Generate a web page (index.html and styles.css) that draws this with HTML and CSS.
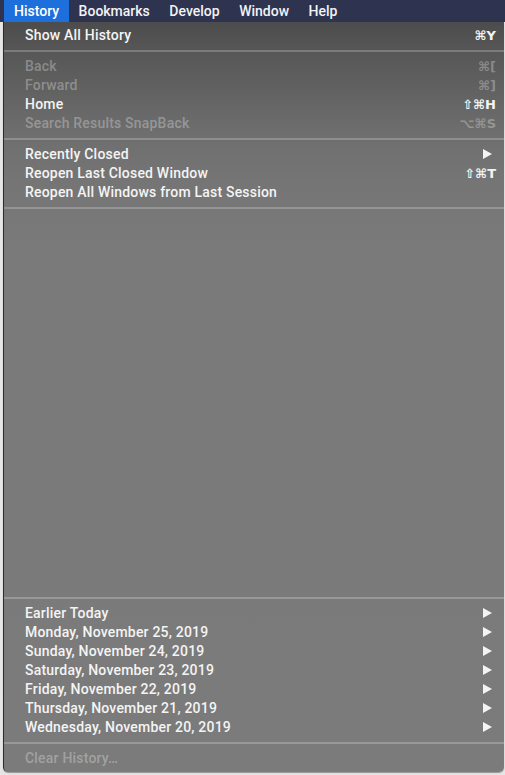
FILE: index.html
```html
<!DOCTYPE html>
<html lang="en">
<head>
<meta charset="utf-8">
<title>History menu</title>
<link rel="stylesheet" href="styles.css">
</head>
<body>
<div class="menubar">
  <span class="mb-item active">History</span>
  <span class="mb-item">Bookmarks</span>
  <span class="mb-item">Develop</span>
  <span class="mb-item">Window</span>
  <span class="mb-item">Help</span>
</div>
<div class="stage">
  <div class="menu">
    <div class="item"><span class="label">Show All History</span><span class="key">⌘Y</span></div>
    <div class="sep"></div>
    <div class="item disabled"><span class="label">Back</span><span class="key">⌘[</span></div>
    <div class="item disabled"><span class="label">Forward</span><span class="key">⌘]</span></div>
    <div class="item"><span class="label">Home</span><span class="key">⇧⌘H</span></div>
    <div class="item disabled"><span class="label">Search Results SnapBack</span><span class="key">⌥⌘S</span></div>
    <div class="sep"></div>
    <div class="item"><span class="label">Recently Closed</span><svg class="arrow" viewBox="0 0 9 10"><path d="M0 0 L9 5 L0 10 Z"/></svg></div>
    <div class="item"><span class="label">Reopen Last Closed Window</span><span class="key">⇧⌘T</span></div>
    <div class="item"><span class="label">Reopen All Windows from Last Session</span></div>
    <div class="sep"></div>
    <div class="spacer"></div>
    <div class="sep"></div>
    <div class="item"><span class="label">Earlier Today</span><svg class="arrow" viewBox="0 0 9 10"><path d="M0 0 L9 5 L0 10 Z"/></svg></div>
    <div class="item"><span class="label">Monday, November 25, 2019</span><svg class="arrow" viewBox="0 0 9 10"><path d="M0 0 L9 5 L0 10 Z"/></svg></div>
    <div class="item"><span class="label">Sunday, November 24, 2019</span><svg class="arrow" viewBox="0 0 9 10"><path d="M0 0 L9 5 L0 10 Z"/></svg></div>
    <div class="item"><span class="label">Saturday, November 23, 2019</span><svg class="arrow" viewBox="0 0 9 10"><path d="M0 0 L9 5 L0 10 Z"/></svg></div>
    <div class="item"><span class="label">Friday, November 22, 2019</span><svg class="arrow" viewBox="0 0 9 10"><path d="M0 0 L9 5 L0 10 Z"/></svg></div>
    <div class="item"><span class="label">Thursday, November 21, 2019</span><svg class="arrow" viewBox="0 0 9 10"><path d="M0 0 L9 5 L0 10 Z"/></svg></div>
    <div class="item"><span class="label">Wednesday, November 20, 2019</span><svg class="arrow" viewBox="0 0 9 10"><path d="M0 0 L9 5 L0 10 Z"/></svg></div>
    <div class="sep"></div>
    <div class="item disabled"><span class="label">Clear History…</span></div>
  </div>
</div>
</body>
</html>
```

FILE: styles.css
```css
html, body {
  margin: 0;
  padding: 0;
}
body {
  width: 505px;
  height: 775px;
  overflow: hidden;
  background: #e6e6e6;
  font-family: Roboto, "Liberation Sans", "DejaVu Sans", sans-serif;
  font-weight: 500;
  font-size: 14px;
  color: #f4f4f4;
}
.menubar {
  height: 22px;
  background: #2e3350;
  display: flex;
  align-items: stretch;
  padding-left: 4px;
}
.mb-item {
  display: flex;
  align-items: center;
  padding: 0 9.5px 1px 10px;
  color: #f2f2f4;
}
.mb-item.active {
  background: #1d6fdc;
  color: #ffffff;
}
.stage {
  padding-left: 3px;
}
.menu {
  width: 500px;
  border-left: 1px solid #2c2c2c;
  border-radius: 0 0 5px 5px;
  padding: 4px 0;
  background: linear-gradient(to bottom, #4c4c4c 0px, #575757 30px, #626262 70px, #6e6e6e 110px, #757575 160px, #7a7a7a 230px, #7b7b7b 100%);
  box-shadow: 0 1px 1px rgba(0,0,0,0.35);
}
.item {
  box-sizing: border-box;
  height: 19px;
  display: flex;
  align-items: center;
  justify-content: space-between;
  padding: 0 8px 1px 21px;
  letter-spacing: 0.2px;
}
.item.disabled {
  color: rgba(255, 255, 255, 0.3);
}
.key {
  font-family: "DejaVu Sans", "Liberation Sans", sans-serif;
  font-weight: 700;
  font-size: 13px;
  letter-spacing: 0;
}
.arrow {
  width: 9px;
  height: 10px;
  margin-right: 4px;
  fill: #f4f4f4;
}
.sep {
  height: 2px;
  margin: 5px 0;
  background: rgba(255, 255, 255, 0.22);
}
.spacer {
  height: 378px;
}
```
